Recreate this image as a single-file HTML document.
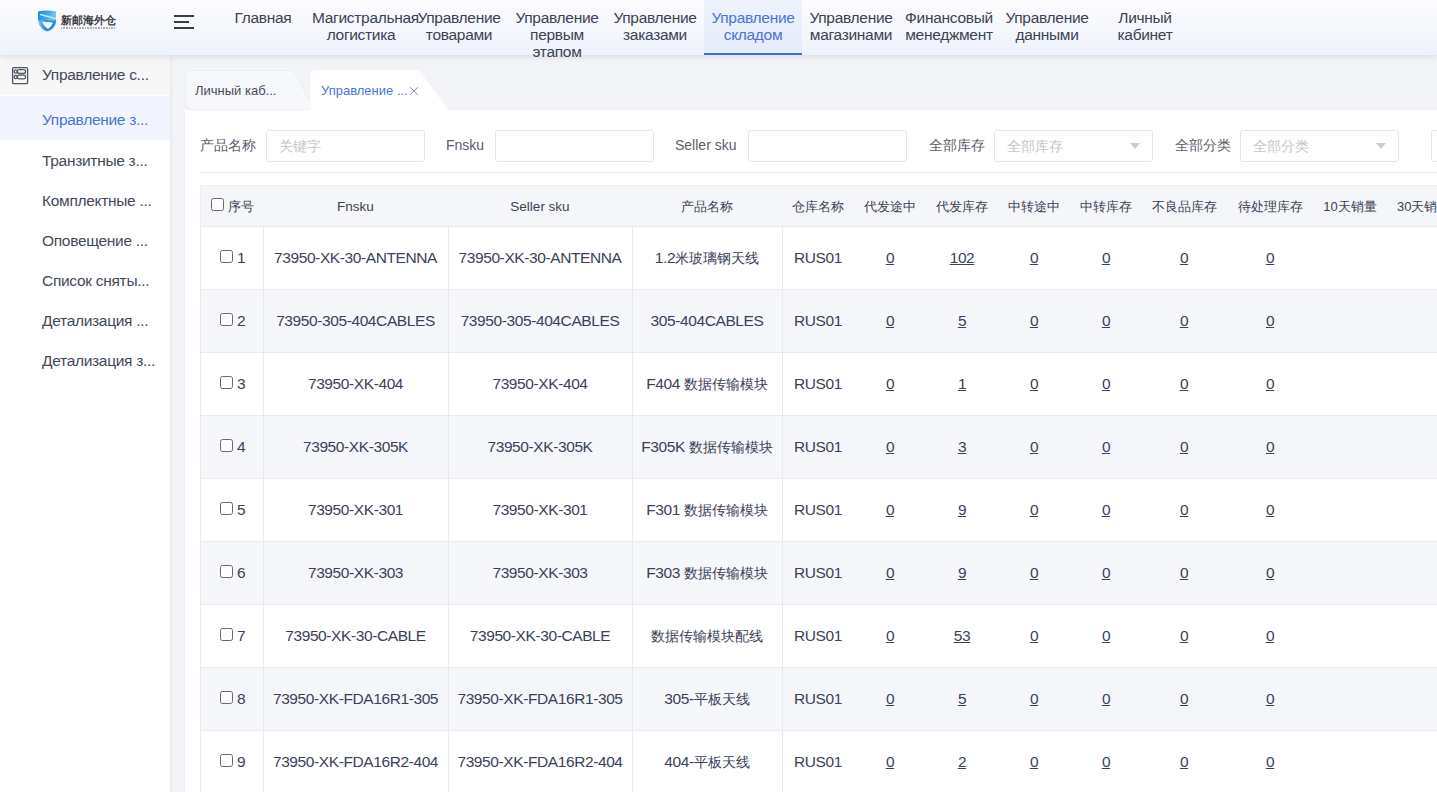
<!DOCTYPE html>
<html><head><meta charset="utf-8">
<style>
*{box-sizing:border-box;margin:0;padding:0}
html,body{width:1437px;height:792px;overflow:hidden;background:#f3f4f8;font-family:"Liberation Sans",sans-serif;color:#3c4252}
.abs{position:absolute}
#hdr{position:absolute;left:0;top:0;width:1437px;height:55px;background:linear-gradient(#fdfdfe,#eef2fb);box-shadow:0 2px 6px rgba(40,50,80,.12);z-index:5}
.nav{position:absolute;top:10.4px;width:98px;text-align:center;font-size:15.5px;letter-spacing:-0.3px;line-height:16.8px;color:#3c4252;white-space:nowrap}
.nav.l{text-align:left}
#act{position:absolute;left:704px;top:0;width:98px;height:55px;background:linear-gradient(#eef2fc,#e4ebfa);border-bottom:2px solid #3d6fd2}
#side{position:absolute;left:0;top:55px;width:170px;height:737px;background:#fff;z-index:3;box-shadow:1px 0 3px rgba(30,40,60,.07)}
#shead{position:absolute;left:0;top:0;width:170px;height:40px;background:#f7f7f8}
.si{position:absolute;left:42px;font-size:15.5px;letter-spacing:-0.3px;line-height:17px;color:#434959;white-space:nowrap}
#panel{position:absolute;left:185px;top:109.5px;width:1252px;height:684px;background:#fff}
.lbl{position:absolute;top:137px;font-size:14px;line-height:17px;color:#5a606c;white-space:nowrap}
.inp{position:absolute;top:130px;width:159px;height:32px;border:1px solid #e4e6e9;border-radius:3px;background:#fff}
.ph{position:absolute;left:12px;top:7px;font-size:14px;line-height:17px;color:#c4c7cd;white-space:nowrap}
.arr{position:absolute;right:12px;top:12px;width:0;height:0;border-left:5px solid transparent;border-right:5px solid transparent;border-top:6.5px solid #cbcdd2}
#thead{position:absolute;left:200px;top:185px;width:1237px;height:42px;background:#f4f6fa;border-top:1px solid #eceef2;border-left:1px solid #eceef2}
.th{position:absolute;top:198px;font-size:13px;line-height:17px;color:#3c4252;white-space:nowrap}
.row{position:absolute;left:200px;width:1237px;height:63px;border-top:1px solid #e8eaef;border-left:1px solid #e8eaef}
.row.s{background:#f6f7fb}
.vl{position:absolute;width:1px;background:#e8eaef}
.td{position:absolute;font-size:15.5px;line-height:17px;color:#3b4257;white-space:nowrap;text-align:center;letter-spacing:-0.4px}
.c14{font-size:14px;letter-spacing:0}
.u{text-decoration:underline}
.cb{position:absolute;width:13px;height:13px;border:1px solid #66696f;border-radius:2.5px;background:#fff}
</style></head><body>

<div id="hdr">
  <!-- logo -->
  <svg class="abs" style="left:38px;top:10px" width="18" height="21.5" viewBox="0 0 18 21.5">
    <defs><linearGradient id="lg" x1="0" y1="0" x2="1" y2="0.3"><stop offset="0" stop-color="#1a86c9"/><stop offset=".55" stop-color="#3aa6de"/><stop offset="1" stop-color="#7cc6ec"/></linearGradient>
    <linearGradient id="lg2" x1="0" y1="0" x2="1" y2="0"><stop offset="0" stop-color="#8cc8ee"/><stop offset=".4" stop-color="#2a8ad6"/><stop offset="1" stop-color="#2c8fd8"/></linearGradient></defs>
    <path d="M0 10 L18 10 L18 12 Q17 18.5 9.5 21.5 Q1.5 19 0.3 12 Z" fill="url(#lg2)"/>
    <path d="M0 1.5 Q9 -0.5 18 1.5 L18 10.5 L0 10.5 Z" fill="url(#lg)"/>
    <path d="M1.5 3.5 Q9 5 18 8 L18 9 Q9 7 2.5 5.5 Z" fill="#d9f1fc" opacity=".85"/>
    <path d="M3.8 11.5 Q10 12.2 15 12.5 Q13.5 17 10 19 Q6 16.5 3.8 11.5 Z" fill="#eef7fe"/>
  </svg>
  <div class="abs" style="left:61px;top:13.5px;font-size:11px;line-height:13px;font-weight:bold;color:#3a3a3a;letter-spacing:0px">新邮海外仓</div>
  <div class="abs" style="left:61px;top:26.5px;width:54px;height:2px;background:repeating-linear-gradient(90deg,#555 0 1px,transparent 1px 1.6px);opacity:.45"></div>
  <!-- hamburger -->
  <div class="abs" style="left:174px;top:15px;width:20px;height:2px;background:#3a3c42"></div>
  <div class="abs" style="left:174px;top:21px;width:15px;height:2px;background:#3a3c42"></div>
  <div class="abs" style="left:174px;top:27px;width:20px;height:2px;background:#3a3c42"></div>

  <div id="act"></div>
  <div class="nav" style="left:214px">Главная</div>
  <div class="nav l" style="left:312px">Магистральная</div>
  <div class="nav" style="left:312px;top:27.2px">логистика</div>
  <div class="nav" style="left:410px">Управление<br>товарами</div>
  <div class="nav" style="left:508px">Управление<br>первым<br>этапом</div>
  <div class="nav" style="left:606px">Управление<br>заказами</div>
  <div class="nav" style="left:704px;color:#4a74dc">Управление<br>складом</div>
  <div class="nav" style="left:802px">Управление<br>магазинами</div>
  <div class="nav" style="left:900px">Финансовый<br>менеджмент</div>
  <div class="nav" style="left:998px">Управление<br>данными</div>
  <div class="nav" style="left:1096px">Личный<br>кабинет</div>
</div>

<div id="side">
  <div id="shead"></div>
  <svg class="abs" style="left:11px;top:11px" width="18" height="19" viewBox="0 0 18 19" fill="none" stroke="#4f5562" stroke-width="1.3">
    <rect x="1.6" y="1.6" width="15" height="16" rx="1.2"/>
    <rect x="6.3" y="3.6" width="8.3" height="3.9" rx="1.95"/>
    <rect x="6.3" y="9.2" width="8.3" height="3.6" rx="1.8"/>
    <circle cx="4.7" cy="5.5" r="1.6"/>
    <circle cx="4.7" cy="11" r="1.6"/>
  </svg>
  <div class="si" style="top:11px">Управление с...</div>
  <div class="abs" style="left:0;top:41px;width:170px;height:44px;background:#f2f5fd"></div>
  <div class="si" style="top:56px;color:#4a74dc">Управление з...</div>
  <div class="si" style="top:97px">Транзитные з...</div>
  <div class="si" style="top:137px">Комплектные ...</div>
  <div class="si" style="top:177px">Оповещение ...</div>
  <div class="si" style="top:217px">Список сняты...</div>
  <div class="si" style="top:257px">Детализация ...</div>
  <div class="si" style="top:297px">Детализация з...</div>
</div>

<!-- tabs -->
<div id="panel"></div>
<svg class="abs" style="left:180px;top:66px" width="290" height="46" viewBox="0 0 290 46">
  <path d="M5.5 37.4 L5.5 10.6 Q5.5 4.6 11.5 4.6 L110 4.6 Q114 4.6 116 8 L131 38 Q133 43.4 137 43.4 L11.5 43.4 Q5.5 43.4 5.5 37.4 Z" fill="#f7f8fb" stroke="#eaecf1" stroke-width="1"/>
  <path d="M130.5 46 L130.5 10 Q130.5 4 136.5 4 L236 4 Q239 4 241 7 L270 46 Z" fill="#fff"/>
</svg>
<div class="abs" style="left:195px;top:83px;font-size:13px;line-height:15px;color:#474d5b;white-space:nowrap">Личный каб...</div>
<div class="abs" style="left:321px;top:83px;font-size:13px;line-height:15px;color:#4a74dc;white-space:nowrap">Управление ...</div>
<svg class="abs" style="left:409px;top:86px" width="10" height="10" viewBox="0 0 10 10" stroke="#8d9097" stroke-width="1"><path d="M1.2 1.2L8.8 8.8M8.8 1.2L1.2 8.8"/></svg>

<!-- filters -->
<div class="lbl" style="left:200px">产品名称</div>
<div class="inp" style="left:266px"><div class="ph">关键字</div></div>
<div class="lbl" style="left:446px">Fnsku</div>
<div class="inp" style="left:495px"></div>
<div class="lbl" style="left:675px">Seller sku</div>
<div class="inp" style="left:748px"></div>
<div class="lbl" style="left:929px">全部库存</div>
<div class="inp" style="left:994px"><div class="ph">全部库存</div><div class="arr"></div></div>
<div class="lbl" style="left:1175px">全部分类</div>
<div class="inp" style="left:1240px"><div class="ph">全部分类</div><div class="arr"></div></div>
<div class="inp" style="left:1431px"></div>
<div class="abs" style="left:200px;top:172px;width:1237px;height:1px;background:#e8eaee"></div>

<!-- table header -->
<div id="thead"></div>
<div class="cb" style="left:211px;top:198px"></div>
<div class="th" style="left:228px">序号</div>
<div class="th" style="left:263px;width:185px;text-align:center;font-size:13.5px">Fnsku</div>
<div class="th" style="left:448px;width:184px;text-align:center;font-size:13.5px">Seller sku</div>
<div class="th" style="left:632px;width:150px;text-align:center">产品名称</div>
<div class="th" style="left:782px;width:72px;text-align:center">仓库名称</div>
<div class="th" style="left:854px;width:72px;text-align:center">代发途中</div>
<div class="th" style="left:926px;width:72px;text-align:center">代发库存</div>
<div class="th" style="left:998px;width:72px;text-align:center">中转途中</div>
<div class="th" style="left:1070px;width:72px;text-align:center">中转库存</div>
<div class="th" style="left:1142px;width:84px;text-align:center">不良品库存</div>
<div class="th" style="left:1226px;width:88px;text-align:center">待处理库存</div>
<div class="th" style="left:1314px;width:72px;text-align:center">10天销量</div>
<div class="th" style="left:1397px">30天销量</div>

<div class="row" style="top:226px"></div>
<div class="cb" style="left:220px;top:250px"></div>
<div class="td" style="left:237px;top:249px;text-align:left">1</div>
<div class="td" style="left:263px;width:185px;top:249px">73950-XK-30-ANTENNA</div>
<div class="td" style="left:448px;width:184px;top:249px">73950-XK-30-ANTENNA</div>
<div class="td" style="left:632px;width:150px;top:249px">1.2<span class="c14">米玻璃钢天线</span></div>
<div class="td" style="left:782px;width:72px;top:249px">RUS01</div>
<div class="td" style="left:854px;width:72px;top:249px"><span class="u">0</span></div>
<div class="td" style="left:926px;width:72px;top:249px"><span class="u">102</span></div>
<div class="td" style="left:998px;width:72px;top:249px"><span class="u">0</span></div>
<div class="td" style="left:1070px;width:72px;top:249px"><span class="u">0</span></div>
<div class="td" style="left:1142px;width:84px;top:249px"><span class="u">0</span></div>
<div class="td" style="left:1226px;width:88px;top:249px"><span class="u">0</span></div>
<div class="row s" style="top:289px"></div>
<div class="cb" style="left:220px;top:313px"></div>
<div class="td" style="left:237px;top:312px;text-align:left">2</div>
<div class="td" style="left:263px;width:185px;top:312px">73950-305-404CABLES</div>
<div class="td" style="left:448px;width:184px;top:312px">73950-305-404CABLES</div>
<div class="td" style="left:632px;width:150px;top:312px">305-404CABLES</div>
<div class="td" style="left:782px;width:72px;top:312px">RUS01</div>
<div class="td" style="left:854px;width:72px;top:312px"><span class="u">0</span></div>
<div class="td" style="left:926px;width:72px;top:312px"><span class="u">5</span></div>
<div class="td" style="left:998px;width:72px;top:312px"><span class="u">0</span></div>
<div class="td" style="left:1070px;width:72px;top:312px"><span class="u">0</span></div>
<div class="td" style="left:1142px;width:84px;top:312px"><span class="u">0</span></div>
<div class="td" style="left:1226px;width:88px;top:312px"><span class="u">0</span></div>
<div class="row" style="top:352px"></div>
<div class="cb" style="left:220px;top:376px"></div>
<div class="td" style="left:237px;top:375px;text-align:left">3</div>
<div class="td" style="left:263px;width:185px;top:375px">73950-XK-404</div>
<div class="td" style="left:448px;width:184px;top:375px">73950-XK-404</div>
<div class="td" style="left:632px;width:150px;top:375px">F404 <span class="c14">数据传输模块</span></div>
<div class="td" style="left:782px;width:72px;top:375px">RUS01</div>
<div class="td" style="left:854px;width:72px;top:375px"><span class="u">0</span></div>
<div class="td" style="left:926px;width:72px;top:375px"><span class="u">1</span></div>
<div class="td" style="left:998px;width:72px;top:375px"><span class="u">0</span></div>
<div class="td" style="left:1070px;width:72px;top:375px"><span class="u">0</span></div>
<div class="td" style="left:1142px;width:84px;top:375px"><span class="u">0</span></div>
<div class="td" style="left:1226px;width:88px;top:375px"><span class="u">0</span></div>
<div class="row s" style="top:415px"></div>
<div class="cb" style="left:220px;top:439px"></div>
<div class="td" style="left:237px;top:438px;text-align:left">4</div>
<div class="td" style="left:263px;width:185px;top:438px">73950-XK-305K</div>
<div class="td" style="left:448px;width:184px;top:438px">73950-XK-305K</div>
<div class="td" style="left:632px;width:150px;top:438px">F305K <span class="c14">数据传输模块</span></div>
<div class="td" style="left:782px;width:72px;top:438px">RUS01</div>
<div class="td" style="left:854px;width:72px;top:438px"><span class="u">0</span></div>
<div class="td" style="left:926px;width:72px;top:438px"><span class="u">3</span></div>
<div class="td" style="left:998px;width:72px;top:438px"><span class="u">0</span></div>
<div class="td" style="left:1070px;width:72px;top:438px"><span class="u">0</span></div>
<div class="td" style="left:1142px;width:84px;top:438px"><span class="u">0</span></div>
<div class="td" style="left:1226px;width:88px;top:438px"><span class="u">0</span></div>
<div class="row" style="top:478px"></div>
<div class="cb" style="left:220px;top:502px"></div>
<div class="td" style="left:237px;top:501px;text-align:left">5</div>
<div class="td" style="left:263px;width:185px;top:501px">73950-XK-301</div>
<div class="td" style="left:448px;width:184px;top:501px">73950-XK-301</div>
<div class="td" style="left:632px;width:150px;top:501px">F301 <span class="c14">数据传输模块</span></div>
<div class="td" style="left:782px;width:72px;top:501px">RUS01</div>
<div class="td" style="left:854px;width:72px;top:501px"><span class="u">0</span></div>
<div class="td" style="left:926px;width:72px;top:501px"><span class="u">9</span></div>
<div class="td" style="left:998px;width:72px;top:501px"><span class="u">0</span></div>
<div class="td" style="left:1070px;width:72px;top:501px"><span class="u">0</span></div>
<div class="td" style="left:1142px;width:84px;top:501px"><span class="u">0</span></div>
<div class="td" style="left:1226px;width:88px;top:501px"><span class="u">0</span></div>
<div class="row s" style="top:541px"></div>
<div class="cb" style="left:220px;top:565px"></div>
<div class="td" style="left:237px;top:564px;text-align:left">6</div>
<div class="td" style="left:263px;width:185px;top:564px">73950-XK-303</div>
<div class="td" style="left:448px;width:184px;top:564px">73950-XK-303</div>
<div class="td" style="left:632px;width:150px;top:564px">F303 <span class="c14">数据传输模块</span></div>
<div class="td" style="left:782px;width:72px;top:564px">RUS01</div>
<div class="td" style="left:854px;width:72px;top:564px"><span class="u">0</span></div>
<div class="td" style="left:926px;width:72px;top:564px"><span class="u">9</span></div>
<div class="td" style="left:998px;width:72px;top:564px"><span class="u">0</span></div>
<div class="td" style="left:1070px;width:72px;top:564px"><span class="u">0</span></div>
<div class="td" style="left:1142px;width:84px;top:564px"><span class="u">0</span></div>
<div class="td" style="left:1226px;width:88px;top:564px"><span class="u">0</span></div>
<div class="row" style="top:604px"></div>
<div class="cb" style="left:220px;top:628px"></div>
<div class="td" style="left:237px;top:627px;text-align:left">7</div>
<div class="td" style="left:263px;width:185px;top:627px">73950-XK-30-CABLE</div>
<div class="td" style="left:448px;width:184px;top:627px">73950-XK-30-CABLE</div>
<div class="td" style="left:632px;width:150px;top:627px"><span class="c14">数据传输模块配线</span></div>
<div class="td" style="left:782px;width:72px;top:627px">RUS01</div>
<div class="td" style="left:854px;width:72px;top:627px"><span class="u">0</span></div>
<div class="td" style="left:926px;width:72px;top:627px"><span class="u">53</span></div>
<div class="td" style="left:998px;width:72px;top:627px"><span class="u">0</span></div>
<div class="td" style="left:1070px;width:72px;top:627px"><span class="u">0</span></div>
<div class="td" style="left:1142px;width:84px;top:627px"><span class="u">0</span></div>
<div class="td" style="left:1226px;width:88px;top:627px"><span class="u">0</span></div>
<div class="row s" style="top:667px"></div>
<div class="cb" style="left:220px;top:691px"></div>
<div class="td" style="left:237px;top:690px;text-align:left">8</div>
<div class="td" style="left:263px;width:185px;top:690px">73950-XK-FDA16R1-305</div>
<div class="td" style="left:448px;width:184px;top:690px">73950-XK-FDA16R1-305</div>
<div class="td" style="left:632px;width:150px;top:690px">305-<span class="c14">平板天线</span></div>
<div class="td" style="left:782px;width:72px;top:690px">RUS01</div>
<div class="td" style="left:854px;width:72px;top:690px"><span class="u">0</span></div>
<div class="td" style="left:926px;width:72px;top:690px"><span class="u">5</span></div>
<div class="td" style="left:998px;width:72px;top:690px"><span class="u">0</span></div>
<div class="td" style="left:1070px;width:72px;top:690px"><span class="u">0</span></div>
<div class="td" style="left:1142px;width:84px;top:690px"><span class="u">0</span></div>
<div class="td" style="left:1226px;width:88px;top:690px"><span class="u">0</span></div>
<div class="row" style="top:730px"></div>
<div class="cb" style="left:220px;top:754px"></div>
<div class="td" style="left:237px;top:753px;text-align:left">9</div>
<div class="td" style="left:263px;width:185px;top:753px">73950-XK-FDA16R2-404</div>
<div class="td" style="left:448px;width:184px;top:753px">73950-XK-FDA16R2-404</div>
<div class="td" style="left:632px;width:150px;top:753px">404-<span class="c14">平板天线</span></div>
<div class="td" style="left:782px;width:72px;top:753px">RUS01</div>
<div class="td" style="left:854px;width:72px;top:753px"><span class="u">0</span></div>
<div class="td" style="left:926px;width:72px;top:753px"><span class="u">2</span></div>
<div class="td" style="left:998px;width:72px;top:753px"><span class="u">0</span></div>
<div class="td" style="left:1070px;width:72px;top:753px"><span class="u">0</span></div>
<div class="td" style="left:1142px;width:84px;top:753px"><span class="u">0</span></div>
<div class="td" style="left:1226px;width:88px;top:753px"><span class="u">0</span></div>
<div class="vl" style="left:263px;top:227px;height:565px"></div>
<div class="vl" style="left:448px;top:227px;height:565px"></div>
<div class="vl" style="left:632px;top:227px;height:565px"></div>
<div class="vl" style="left:782px;top:227px;height:565px"></div>
</body></html>
